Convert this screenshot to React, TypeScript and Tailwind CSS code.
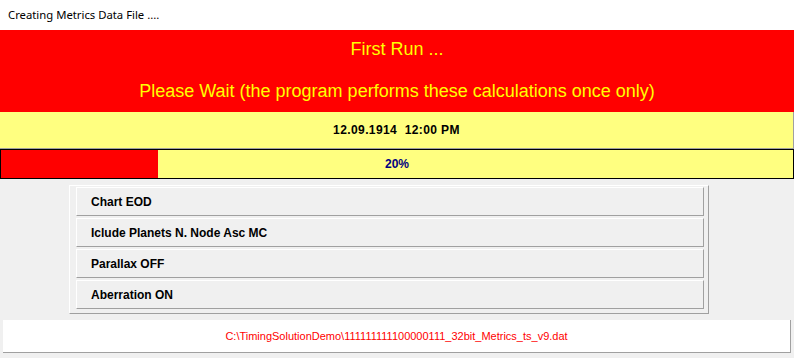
export default function App() {
    const options = ["Chart EOD", "Iclude Planets N. Node Asc MC", "Parallax OFF", "Aberration ON"]
    const progress = 20

    return (
        <div className="w-[794px] h-[358px] bg-[#f0f0f0] overflow-hidden font-['Liberation_Sans',Arial,sans-serif]">
            <div className="h-[30px] bg-white flex items-center pl-2 text-[11.3px] text-black font-['Noto_Sans',sans-serif]">
                Creating Metrics Data File ....
            </div>

            <div className="h-[82px] bg-[#ff0000] flex flex-col items-center text-[#ffff00] text-[18px]">
                <div className="mt-[8px] leading-[22px]">First Run ...</div>
                <div className="mt-[20px] leading-[22px]">Please Wait (the program performs these calculations once only)</div>
            </div>

            <div className="h-[37px] bg-[#ffff80] border-b border-r border-[#a0a0a0] flex items-center justify-center text-[12px] font-bold tracking-[0.4px]">
                12.09.1914&nbsp;&nbsp;12:00 PM
            </div>

            <div className="relative h-[30px] bg-[#ffff80] border border-black flex items-center justify-center">
                <div className="absolute left-0 top-0 bottom-0 bg-[#ff0000]" style={{ width: `${(progress / 100) * 785}px` }} />
                <span className="relative text-[12px] font-bold text-[#000080]">{progress}%</span>
            </div>

            <div className="pl-[69px] pt-[6px]">
                <div className="w-[640px] h-[129px] border-t border-l border-white border-b border-r border-b-[#a0a0a0] border-r-[#a0a0a0] pl-[6px] pr-[4px] pt-[1px]">
                    <div className="flex flex-col gap-[2px]">
                        {options.map((o) => (
                            <div key={o} className="h-[29px] border-t border-l border-white border-b border-r border-b-[#a0a0a0] border-r-[#a0a0a0] flex items-center pl-[14px] text-[12px] font-bold">
                                {o}
                            </div>
                        ))}
                    </div>
                </div>
            </div>

            <div className="ml-[3px] mt-[6px] w-[788px] h-[33px] bg-white border-b border-r border-[#a0a0a0] flex items-center justify-center text-[11px] text-[#ff0000]">
                C:\TimingSolutionDemo\111111111100000111_32bit_Metrics_ts_v9.dat
            </div>
        </div>
    );
}
